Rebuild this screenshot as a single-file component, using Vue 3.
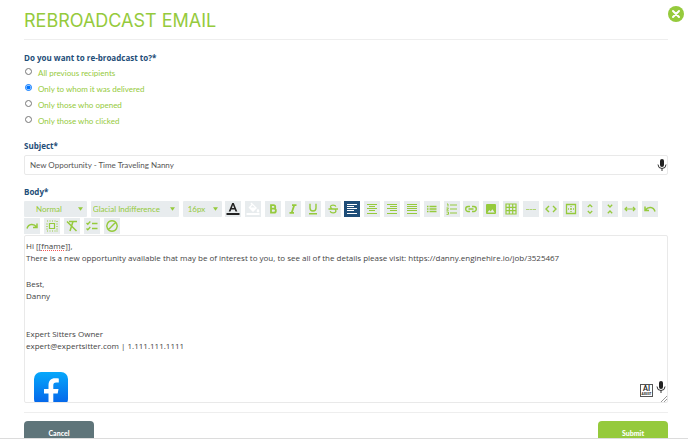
<script setup>
import { ref } from "vue";

const audience = ref("delivered");
const subject = ref("New Opportunity - Time Traveling Nanny");
const format = ref("Normal");
const font = ref("Glacial Indifference");
const size = ref("16px");
const activeTool = ref("Align left");

const audiences = [
  { value: "all", label: "All previous recipients" },
  { value: "delivered", label: "Only to whom it was delivered" },
  { value: "opened", label: "Only those who opened" },
  { value: "clicked", label: "Only those who clicked" }
];

// icons are drawn on a 16x16 grid, "fill" ones are solid
const tools = [
  { name: "Text color", fill: true, dark: true, d: "M7.2 2h1.6l3.500 8.500h-1.800l-.8-2H6.300l-.8 2H3.700zM6.900 7h2.200L8 4.100zM1.500 12h13v2h-13z" },
  { name: "Background color", fill: true, light: true, d: "M5.500 2.500l1-1 5.500 5.500-4 4-4.500-4.500 3-3zM5.500 6.500h4.500L7.500 4.200zM13 7.500c1 1.500 1.400 2 1.400 2.600a1.400 1.400 0 0 1-2.800 0c0-.6.4-1.100 1.400-2.600zM1.500 12h13v2h-13z" },
  { name: "Bold", d: "M6 4.200h2.500a1.700 1.700 0 0 1 0 3.500H6zM6 7.700h2.900a1.900 1.900 0 0 1 0 3.900H6z", width: 1.800 },
  { name: "Italic", d: "M7 4.200h4.500M4.500 11.800H9M9.200 4.200l-2.500 7.600", width: 1.800 },
  { name: "Underline", d: "M5 2.800v4.200a3 3 0 0 0 6 0V2.800M4 12.800h8", width: 1.400 },
  { name: "Strikethrough", d: "M10.800 5.600C10.500 3.800 5.500 3.500 5.500 5.800c0 1 .8 1.700 1.800 2.200M5.200 10.200c.5 2.400 5.700 2.300 5.700-.1 0-.8-.3-1.300-1-1.800M3.500 8h9.500", width: 1.300 },
  { name: "Align left", d: "M3 3.500h10M3 5.500h7M3 7.500h10M3 9.500h7M3 12.500h10" },
  { name: "Align center", d: "M3 3.500h10M5 5.500h6M3 7.500h10M5 9.500h6M3 12.500h10" },
  { name: "Align right", d: "M3 3.500h10M6 5.500h7M3 7.500h10M6 9.500h7M3 12.500h10" },
  { name: "Justify", d: "M3 3.500h10M3 5.500h10M3 7.500h10M3 9.500h10M3 12.500h10" },
  { name: "Bullet list", d: "M3 5.500h1.500M3 8h1.500M3 10.500h1.500M5.500 5.500h7M5.500 8h7M5.500 10.500h7", width: 1.300 },
  { name: "Numbered list", d: "M3 3h1v2.500M2.500 7h2L2.700 9.200h2M2.500 11h2v2.300h-2M6 4h7M6 8h7M6 12h7" },
  { name: "Link", d: "M7 5.500H5.200a2.500 2.500 0 0 0 0 5H7M9 5.500h1.800a2.500 2.500 0 0 1 0 5H9M5.500 8h5", width: 1.400 },
  { name: "Image", fill: true, d: "M4 3h8a1 1 0 0 1 1 1v8a1 1 0 0 1-1 1H4a1 1 0 0 1-1-1V4a1 1 0 0 1 1-1zM4.500 11.500h7.200l-2.300-3.300-1.800 2.200-1.300-1.300z" },
  { name: "Table", d: "M3 3h10v10H3zM3 6.300h10M3 9.700h10M6.300 3v10M9.700 3v10", width: 1.200 },
  { name: "Horizontal line", d: "M3 8.500h3M6.500 8.500h3M10 8.500h3", width: 0.700 },
  { name: "Code view", d: "M6 5L3 8l3 3M10 5l3 3-3 3", width: 1.400 },
  { name: "Borders", d: "M3.500 3.500h9v9h-9zM8 5v1M8 7.500v1M8 10v1M5 8h1M10 8h1M7 8h2", width: 1.300 },
  { name: "Increase height", d: "M5.800 6L8 3.800 10.200 6M5.800 10L8 12.200 10.200 10", width: 1.300 },
  { name: "Decrease height", d: "M5.800 3.800L8 6l2.200-2.200M5.800 12.200L8 10l2.200 2.200", width: 1.300 },
  { name: "Full width", d: "M3 8h10M5 6L3 8l2 2M11 6l2 2-2 2", width: 1.200 },
  { name: "Undo", d: "M3 5.500v4h4M3.500 9C6 5.500 11.500 5.500 13 10.500", width: 1.500 }
];

const moreTools = [
  { name: "Redo", d: "M13 5.500v4H9M12.500 9C10 5.500 4.500 5.500 3 10.500", width: 1.500 },
  { name: "Select all", d: "M5.500 5.500h5v5h-5zM3 3h1M5.500 3h1M8 3h1M10.500 3h1M13 3v1M3 5.500v1M3 8v1M3 10.500v1M13 5.500v1M13 8v1M13 10.500v1M3 13h1M5.500 13h1M8 13h1M10.500 13h1M12.500 13h1", width: 1.200 },
  { name: "Remove format", d: "M5 3.500h8M9 3.500L6 13M3 3.500l9.500 9.500", width: 1.500 },
  { name: "Checklist", d: "M2.500 5l1.300 1.300 2.500-2.800M2.500 10.500l1.300 1.300 2.500-2.800M8 5.500h5.500M8 10.500h5.500", width: 1.300 },
  { name: "Clear", d: "M8 2.800a5.200 5.200 0 1 0 .01 0zM4.300 11.700l7.400-7.400", width: 1.400 }
];
</script>

<template>
  <main class="dialog">
    <button class="close" type="button" aria-label="Close">
      <svg viewBox="0 0 16 16"><path d="M5 5l6 6M11 5l-6 6" /></svg>
    </button>

    <h1>REBROADCAST EMAIL</h1>

    <form @submit.prevent>
      <fieldset>
        <legend>Do you want to re-broadcast to?*</legend>
        <label v-for="item in audiences" :key="item.value" class="radio">
          <input v-model="audience" type="radio" name="audience" :value="item.value">
          <span>{{ item.label }}</span>
        </label>
      </fieldset>

      <label class="title" for="subject">Subject*</label>
      <div class="subject">
        <input id="subject" v-model="subject" type="text">
        <button class="mic" type="button" aria-label="Dictate subject">
          <svg viewBox="0 0 10 12"><rect x="3" y="0" width="4" height="8" rx="2" /><path d="M1 5.500a4 4 0 0 0 8 0M5 9.500V12" /></svg>
        </button>
      </div>

      <label id="body-label" class="title">Body*</label>
      <div class="toolbar">
        <div class="row wide">
          <div class="picker format">
            <select v-model="format" aria-label="Format"><option>Normal</option></select>
            <svg viewBox="0 0 6 4"><path d="M0 0h6L3 4z" /></svg>
          </div>
          <div class="picker font">
            <select v-model="font" aria-label="Font"><option>Glacial Indifference</option></select>
            <svg viewBox="0 0 6 4"><path d="M0 0h6L3 4z" /></svg>
          </div>
          <div class="picker size">
            <select v-model="size" aria-label="Size"><option>16px</option></select>
            <svg viewBox="0 0 6 4"><path d="M0 0h6L3 4z" /></svg>
          </div>
          <button v-for="tool in tools" :key="tool.name" type="button" class="tool" :aria-label="tool.name"
            :class="{ active: tool.name === activeTool, solid: tool.fill, dark: tool.dark, light: tool.light }"
            @click="activeTool = tool.name">
            <svg viewBox="0 0 16 16"><path :d="tool.d" :stroke-width="tool.width || 1" fill-rule="evenodd" /></svg>
          </button>
        </div>
        <div class="row">
          <button v-for="tool in moreTools" :key="tool.name" type="button" class="tool" :aria-label="tool.name">
            <svg viewBox="0 0 16 16"><path :d="tool.d" :stroke-width="tool.width" /></svg>
          </button>
        </div>
      </div>

      <div class="editor">
        <div class="content" contenteditable="true" role="textbox" aria-multiline="true" aria-labelledby="body-label" spellcheck="false">
          <p>Hi [[<span class="misspelled">fname</span>]],<br>There is a new opportunity available that may be of interest to you, to see all of the details please visit: https://danny.enginehire.io/job/3525467</p>
          <p>Best,<br>Danny</p>
          <p class="signature">Expert Sitters Owner<br>expert@expertsitter.com | 1.111.111.1111</p>
          <svg class="facebook" viewBox="0 0 34 34">
            <defs>
              <linearGradient id="fb" x1="0" y1="0" x2="0" y2="1">
                <stop offset="0" stop-color="#06a8fb" />
                <stop offset="1" stop-color="#0560e8" />
              </linearGradient>
            </defs>
            <rect width="34" height="34" rx="7" fill="url(#fb)" />
            <path d="M14.500 34V21.500H10V17h4.500v-3.500c0-5 2.500-7.300 6.500-7.300 1.500 0 2.800.1 3.800.3v4h-2.500c-2.300 0-3 1-3 3V17h5.200l-.8 4.500h-4.400V34z" fill="#fff" />
          </svg>
        </div>
        <div class="assist">
          <button class="ai" type="button"><b>AI</b><small>ASSIST</small></button>
          <button class="mic" type="button" aria-label="Dictate body">
            <svg viewBox="0 0 10 12"><rect x="3" y="0" width="4" height="8" rx="2" /><path d="M1 5.500a4 4 0 0 0 8 0M5 9.500V12" /></svg>
          </button>
        </div>
        <svg class="grip" viewBox="0 0 6 6"><path d="M0 6l6-6M3 6l3-3" /></svg>
      </div>

      <footer>
        <button class="cancel" type="button">Cancel</button>
        <button class="submit" type="submit">Submit</button>
      </footer>
    </form>
  </main>
</template>

<style>
body {
  background: #fff;
  overflow: hidden;
}
</style>

<style scoped>
.dialog {
  position: relative;
  box-sizing: border-box;
  height: 100vh;
  overflow: hidden;
  padding: 9px 20px 0 24px;
  border-bottom: 1px solid #dcdcdc;
  font-family: Lato, "Liberation Sans", sans-serif;
  font-size: 8px;
  color: #444;
}

button,
input,
select {
  font: inherit;
  margin: 0;
}

button {
  padding: 0;
  border: none;
  cursor: pointer;
}

svg {
  display: block;
}

.close {
  position: absolute;
  top: 6px;
  right: 4px;
  width: 16px;
  height: 16px;
  border-radius: 50%;
  background: #95ca3c;
}

.close path {
  fill: none;
  stroke: #fff;
  stroke-width: 2;
  stroke-linecap: round;
}

h1 {
  margin: 0;
  padding-bottom: 6px;
  border-bottom: 1px solid #eee;
  font-family: Inter, sans-serif;
  font-size: 18px;
  line-height: 24px;
  font-weight: 400;
  color: #95ca3c;
}

fieldset {
  margin: 0;
  padding: 0;
  border: none;
}

legend,
.title {
  display: block;
  padding: 0;
  font-family: "Open Sans", sans-serif;
  font-weight: 700;
  line-height: 12px;
  color: #1e4d78;
}

legend {
  padding-top: 12px;
  margin-bottom: 3px;
}

.radio {
  display: flex;
  gap: 6px;
  height: 16px;
  line-height: 12px;
  color: #95ca3c;
}

.radio input {
  width: 7px;
  height: 7px;
  margin: 1px 0 0 1px;
}

.title {
  margin-bottom: 3px;
}

fieldset + .title {
  margin-top: 9px;
}

.subject {
  position: relative;
  margin-bottom: 11px;
}

.subject input {
  display: block;
  box-sizing: border-box;
  width: 100%;
  height: 20px;
  padding: 0 20px 0 5px;
  border: 1px solid #e9e9e9;
  border-radius: 2px;
  color: #555;
}

.mic {
  width: 10px;
  height: 12px;
  background: none;
}

.mic rect {
  fill: #222;
}

.mic path {
  fill: none;
  stroke: #333;
}

.subject .mic {
  position: absolute;
  top: 4px;
  right: 1px;
}

.toolbar {
  display: grid;
  gap: 1px;
  margin-bottom: 1px;
}

.row {
  display: flex;
  gap: 4px;
}

.wide {
  justify-content: space-between;
  gap: 0;
  padding-right: 10px;
}

.picker {
  position: relative;
  height: 16px;
}

.picker select {
  display: block;
  appearance: none;
  box-sizing: border-box;
  width: 100%;
  height: 16px;
  padding: 0 0 0 2px;
  border: none;
  border-radius: 1px;
  background: #e8ecee;
  color: #95ca3c;
}

.picker svg {
  position: absolute;
  top: 6px;
  right: 4px;
  width: 5px;
  height: 4px;
  fill: #95ca3c;
  pointer-events: none;
}

.format {
  width: 63px;
}

.picker.format select {
  padding-left: 12px;
}

.font {
  width: 88px;
}

.size {
  width: 39px;
}

.picker.size select {
  padding-left: 5px;
}

.tool {
  width: 16px;
  height: 16px;
  background: #e8ecee;
  color: #95ca3c;
}

.tool path {
  fill: none;
  stroke: currentColor;
}

.tool.solid path {
  fill: currentColor;
  stroke: none;
}

.dark {
  color: #222;
}

.light {
  color: #fff;
}

.active {
  background: #1e4d78;
  color: #fff;
}

.editor {
  position: relative;
  border: 1px solid #e9e9e9;
  border-radius: 2px;
}

.content {
  box-sizing: border-box;
  height: 166px;
  overflow: hidden;
  padding: 4px 1px 0;
  font-family: "Open Sans", sans-serif;
  line-height: 12px;
  outline: none;
}

.content p {
  margin: 0 0 14px;
}

.content .signature {
  margin: 26px 0 20px;
}

.misspelled {
  text-decoration: underline dotted #e55;
}

.facebook {
  width: 34px;
  height: 34px;
  margin-left: 8px;
}

.assist {
  position: absolute;
  right: 1px;
  bottom: 5px;
  display: flex;
  align-items: flex-end;
  gap: 3px;
}

.assist .mic {
  margin-bottom: 4px;
}

.ai {
  display: grid;
  width: 13px;
  height: 13px;
  border: 1px solid #555;
  background: #fff;
  color: #222;
}

.ai b {
  font-size: 7px;
  line-height: 7px;
}

.ai small {
  font-size: 3px;
  line-height: 4px;
  font-weight: 900;
}

.grip {
  position: absolute;
  right: 0;
  bottom: 0;
  width: 6px;
  height: 6px;
  fill: none;
  stroke: #999;
}

footer {
  display: flex;
  justify-content: space-between;
  margin-top: 9px;
  padding-top: 8px;
  border-top: 1px solid #eee;
}

footer button {
  width: 70px;
  height: 24px;
  border-radius: 4px;
  color: #fff;
  font-size: 7px;
  font-weight: 900;
}

.cancel {
  background: #5f757a;
}

.submit {
  background: #95ca3c;
}
</style>
